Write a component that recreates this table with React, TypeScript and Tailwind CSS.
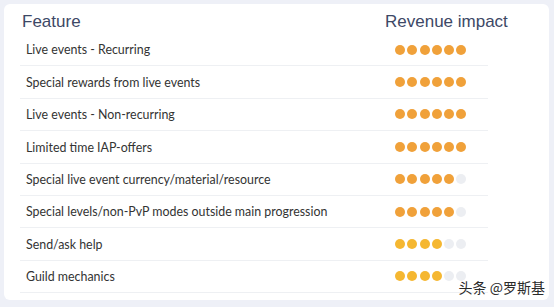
import React from "react";

type Row = { label: string; filled: number; tone: "orange" | "yellow" };

const rows: Row[] = [
  { label: "Live events - Recurring", filled: 6, tone: "orange" },
  { label: "Special rewards from live events", filled: 6, tone: "orange" },
  { label: "Live events - Non-recurring", filled: 6, tone: "orange" },
  { label: "Limited time IAP-offers", filled: 6, tone: "orange" },
  { label: "Special live event currency/material/resource", filled: 5, tone: "orange" },
  { label: "Special levels/non-PvP modes outside main progression", filled: 5, tone: "orange" },
  { label: "Send/ask help", filled: 4, tone: "yellow" },
  { label: "Guild mechanics", filled: 4, tone: "yellow" },
];

function Dots({ filled, tone }: { filled: number; tone: Row["tone"] }) {
  const on = tone === "orange" ? "bg-[#f0a13a]" : "bg-[#f5b731]";
  return (
    <div className="flex gap-[2.3px]">
      {[0, 1, 2, 3, 4, 5].map((i) => (
        <span
          key={i}
          className={`h-[10px] w-[10px] rounded-full ${i < filled ? on : "bg-[#eceef2]"}`}
        />
      ))}
    </div>
  );
}

export default function App() {
  return (
    <div className="h-[307px] w-[554px] bg-[#eef0f7] p-[4px] pr-[5px] pb-[7px]">
      <div className="relative h-full w-full rounded-[6px] bg-white pl-[16px]">
        {/* header */}
        <div className="flex h-[30px] items-end font-['Liberation_Sans',Arial,sans-serif] text-[17px] text-[#3d4866]">
          <div className="w-[365px] pl-[2px]">Feature</div>
          <div>Revenue impact</div>
        </div>

        {/* rows */}
        <div className="w-[468px]">
          {rows.map((r) => (
            <div
              key={r.label}
              className="flex h-[32.4px] items-center border-b border-[#eef0f3]"
            >
              <div className="w-[355px] pl-[6px] pt-[2px] font-['Lato','Open_Sans',sans-serif] text-[12.4px] text-[#333]">
                {r.label}
              </div>
              <div className="pl-[20px]">
                <Dots filled={r.filled} tone={r.tone} />
              </div>
            </div>
          ))}
        </div>

        {/* watermark */}
        <div className="absolute bottom-[2px] right-[4px] font-['Noto_Sans_CJK_SC',sans-serif] text-[14px] text-[#2a2a2a] [text-shadow:0_0_2px_#fff]">
          头条 @罗斯基
        </div>
      </div>
    </div>
  );
}
